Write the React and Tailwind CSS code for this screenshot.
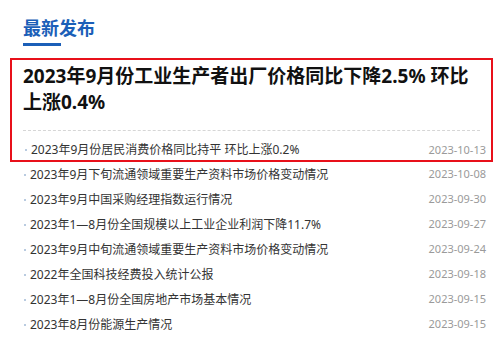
const items = [
  { title: '2023年9月下旬流通领域重要生产资料市场价格变动情况', date: '2023-10-08' },
  { title: '2023年9月中国采购经理指数运行情况', date: '2023-09-30' },
  { title: '2023年1—8月份全国规模以上工业企业利润下降11.7%', date: '2023-09-27' },
  { title: '2023年9月中旬流通领域重要生产资料市场价格变动情况', date: '2023-09-24' },
  { title: '2022年全国科技经费投入统计公报', date: '2023-09-18' },
  { title: '2023年1—8月份全国房地产市场基本情况', date: '2023-09-15' },
  { title: '2023年8月份能源生产情况', date: '2023-09-15' },
];

const font = { fontFamily: '"Noto Sans", "Noto Sans CJK SC", sans-serif' };

const Row = ({ title, date, className = '' }) => (
  <div className={`flex items-center justify-between pr-[14px] ${className}`}>
    <div className="flex items-center text-[12px] text-[#333]">
      <span className="w-[2px] h-[2px] bg-[#b9cbe0] ml-[24px] mr-[4px]"></span>
      <span>{title}</span>
    </div>
    <span className="text-[11px] text-[#9a9a9a]">{date}</span>
  </div>
);

export default function App() {
  return (
    <div className="w-[500px] h-[338px] bg-white overflow-hidden" style={font}>
      {/* header */}
      <div className="pl-[23px] pt-[17px]">
        <h2 className="text-[18px] leading-[22px] font-bold text-[#1b5fb8]">最新发布</h2>
        <div className="mt-[4px] w-[38px] h-[3px] bg-[#1b5fb8]"></div>
      </div>

      {/* featured */}
      <div className="mt-[12px] ml-[10px] mr-[7px] border-2 border-[#e8101a]">
        <h1 className="pl-[11px] pr-[10px] pt-[3px] text-[19px] leading-[26px] font-bold text-[#111]">
          2023年9月份工业生产者出厂价格同比下降2.5% 环比上涨0.4%
        </h1>
        <div className="mt-[15px] mx-[11px] border-t border-dashed border-[#d6d6d6]"></div>
        <div className="h-[20px] mt-[9px] flex items-center justify-between pr-[5px]">
          <div className="flex items-center text-[12px] text-[#333]">
            <span className="w-[2px] h-[2px] bg-[#b9cbe0] ml-[13px] mr-[4px]"></span>
            <span>2023年9月份居民消费价格同比持平 环比上涨0.2%</span>
          </div>
          <span className="text-[11px] text-[#9a9a9a]">2023-10-13</span>
        </div>
      </div>

      {/* list */}
      <div>
        {items.map((item, i) => (
          <Row key={i} title={item.title} date={item.date} className="h-[25px]" />
        ))}
      </div>
    </div>
  );
}
